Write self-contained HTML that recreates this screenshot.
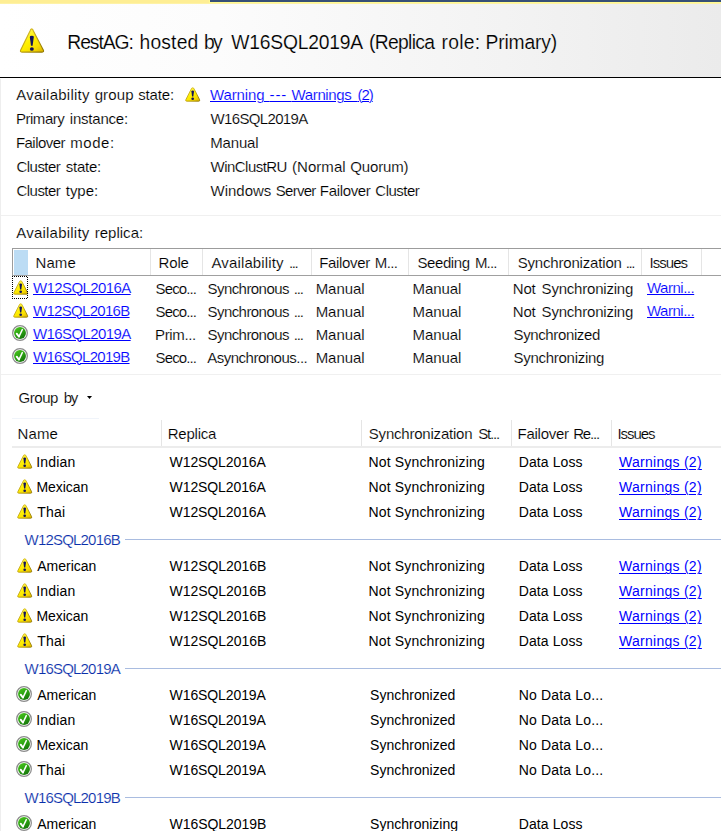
<!DOCTYPE html>
<html lang="en"><head><meta charset="utf-8"><title>RestAG dashboard</title>
<style>
html,body{margin:0;padding:0;background:#fff}
body{width:721px;height:831px;overflow:hidden;position:relative;font-family:"Liberation Sans",Arial,sans-serif;font-size:15px;color:#000}
.t{position:absolute;white-space:pre;line-height:20px;height:20px;color:#000;text-decoration:none;margin:0;font-weight:400;-webkit-text-stroke:0.15px #fff}
a.lnk,a.lnk2{color:#0000ff;text-decoration:underline #00f;text-underline-offset:1px;text-decoration-thickness:1px}
a.lnk2{text-underline-offset:2px}
.grp{color:#0a30aa}
.ms{-webkit-text-stroke:0}
.ic{position:absolute;overflow:visible}
.abs{position:absolute}
#strip{left:0;top:0;width:721px;height:4px;background:linear-gradient(#feee94 0 3px,#fef2a6 3px 4px)}
#navy{left:209px;top:0;width:511px;height:2px;background:#364f76;border-left:1px solid #fffa90;border-bottom:1px solid #fffa90}
#hdr{left:0;top:4px;width:721px;height:73px;background:linear-gradient(90deg,#ffffff 0%,#fcfcfc 30%,#f3f3f3 70%,#ebebeb 100%)}
#hline{left:0;top:77px;width:721px;height:1px;background:#000}
#lb{left:0;top:79px;width:1px;height:752px;background:#eee}
.hl{left:1px;width:720px;height:1px;background:#f0f0f0}
#lv{left:12px;top:248px;width:720px;height:28px;border:1px solid #9c9c9c;border-right:0;border-bottom:1px solid #a0a0a0;box-sizing:border-box;background:#fff}
#lvsel{left:14px;top:250px;width:14px;height:25px;background:#bcdcf4}
.sep{width:1px;background:#e5e5e5}
#focus{left:12px;top:276px;width:16px;height:23px;background:repeating-linear-gradient(90deg,#000 0 1px,transparent 1px 2px) 0 0/100% 1px no-repeat,repeating-linear-gradient(90deg,#000 0 1px,transparent 1px 2px) 0 100%/100% 1px no-repeat,repeating-linear-gradient(180deg,#000 0 1px,transparent 1px 2px) 0 0/1px 100% no-repeat,repeating-linear-gradient(180deg,transparent 0 1px,#000 1px 2px) 100% 0/1px 100% no-repeat}
#h2line{left:12px;top:446px;width:709px;height:2px;background:#ececec}
#gbline{left:12px;top:418px;width:87px;height:1px;background:#f0f4fa}
.gl{height:1px;background:#a9bce0;left:125px;width:596px}
</style></head><body>
<svg width="0" height="0" style="position:absolute"><defs>
<linearGradient id="wg" x1="0.15" y1="0.1" x2="0.8" y2="1"><stop offset="0" stop-color="#fff85a"/><stop offset=".45" stop-color="#fff000"/><stop offset=".8" stop-color="#f8dc00"/><stop offset="1" stop-color="#e2bc00"/></linearGradient>
<linearGradient id="ws" x1="0" y1="0" x2="0.9" y2="1"><stop offset="0" stop-color="#e2c838"/><stop offset=".55" stop-color="#bea010"/><stop offset="1" stop-color="#8f7600"/></linearGradient>
<linearGradient id="og" x1="0.2" y1="0" x2="0.8" y2="1"><stop offset="0" stop-color="#48c41c"/><stop offset=".5" stop-color="#2ba012"/><stop offset="1" stop-color="#14700a"/></linearGradient>
<g id="warn"><path d="M6.5 3.1 C6.9 1.4 9.2 1.4 9.6 3.1 L15.25 13.7 Q15.9 15.15 14.4 15.15 L1.75 15.15 Q.25 15.15 .9 13.7 Z" fill="url(#wg)" stroke="url(#ws)" stroke-width=".95"/><path d="M6.7 5.4 Q6.6 4.4 8.05 4.4 Q9.5 4.4 9.4 5.4 L8.7 10.6 L7.4 10.6 Z" fill="#12125c"/><ellipse cx="8.05" cy="12.65" rx="1.4" ry="1.25" fill="#12125c"/></g>
<g id="warnbig"><path d="M14.0 7.0 C14.7 4.1 16.7 4.1 17.4 7.0 L27.3 26.0 Q28.3 28.1 26.1 28.1 L5.9 28.1 Q3.7 28.1 4.7 26.0 Z" fill="url(#wg)" stroke="url(#ws)" stroke-width="1.1"/><path d="M13.8 13.0 Q13.65 11.7 15.8 11.7 Q17.95 11.7 17.8 13.0 L16.6 21.7 L15.0 21.7 Z" fill="#12125c"/><ellipse cx="15.85" cy="25.0" rx="1.95" ry="1.85" fill="#12125c"/></g>
<g id="ok"><circle cx="8" cy="8" r="7.35" fill="#fff" stroke="#8c8c8c" stroke-width="1.25"/><circle cx="8" cy="8" r="5.95" fill="url(#og)"/><path d="M4.7 8.7 L7 11.6" fill="none" stroke="#fff" stroke-width="1.9" stroke-linecap="round"/><path d="M7 11.6 L10.3 4.6" fill="none" stroke="#fff" stroke-width="1.45" stroke-linecap="round"/></g>
</defs></svg>

<div class="abs" id="strip"></div><div class="abs" id="navy"></div><div class="abs" id="lb"></div>
<header>
<div class="abs" id="hdr"></div><div class="abs" id="hline"></div>
<svg class="ic" style="left:16px;top:24px" width="32" height="32" viewBox="0 0 32 32"><use href="#warnbig"/></svg>
<h1 class="t ttl" style="left:67.3px;top:33.31px;font-size:19.3px;"><span style="letter-spacing:-1.05px;word-spacing:2.39px">RestAG: </span><span style="letter-spacing:0.17px;word-spacing:0.09px">hosted </span><span style="letter-spacing:-1.72px;word-spacing:6.75px">by </span><span style="letter-spacing:-0.23px;word-spacing:2.15px">W16SQL2019A </span><span style="letter-spacing:-0.69px;word-spacing:2.69px">(Replica </span><span style="letter-spacing:0.26px;word-spacing:-0.44px">role: </span><span style="letter-spacing:-0.19px">Primary)</span></h1>
</header>
<section id="info">
<div class="pair">
<span class="t" style="left:16.2px;top:84.8px;"><span style="letter-spacing:0.25px;word-spacing:0.44px">Availability </span><span style="letter-spacing:0.14px;word-spacing:0.2px">group </span><span style="letter-spacing:-0.16px">state:</span></span>
<svg class="ic" style="left:184.5px;top:85.5px" width="15.3" height="16" viewBox="0 0 16 16" preserveAspectRatio="none"><use href="#warn"/></svg>
<a class="t lnk" style="left:210px;top:84.8px;"><span style="letter-spacing:-0.13px;word-spacing:1.14px">Warning </span><span style="letter-spacing:0.85px;word-spacing:-0.57px">--- </span><span style="letter-spacing:-0.37px;word-spacing:2.27px">Warnings </span><span style="letter-spacing:-1.02px">(2)</span></a>
</div>
<div class="pair">
<span class="t" style="left:15.9px;top:108.8px;"><span style="letter-spacing:-0.46px;word-spacing:1.75px">Primary </span><span style="letter-spacing:-0.21px">instance:</span></span>
<span class="t" style="left:210.6px;top:108.8px;letter-spacing:-0.66px;">W16SQL2019A</span>
</div>
<div class="pair">
<span class="t" style="left:15.9px;top:132.8px;"><span style="letter-spacing:-0.52px;word-spacing:1.58px">Failover </span><span style="letter-spacing:0.54px">mode:</span></span>
<span class="t" style="left:210.2px;top:132.8px;letter-spacing:-0.15px;">Manual</span>
</div>
<div class="pair">
<span class="t" style="left:16.5px;top:156.8px;"><span style="letter-spacing:-0.54px;word-spacing:1.91px">Cluster </span><span style="letter-spacing:-0.26px">state:</span></span>
<span class="t" style="left:210.6px;top:156.8px;"><span style="letter-spacing:-0.54px;word-spacing:1.48px">WinClustRU </span><span style="letter-spacing:0.05px;word-spacing:0.4px">(Normal </span><span style="letter-spacing:-0.16px">Quorum)</span></span>
</div>
<div class="pair">
<span class="t" style="left:16.5px;top:180.8px;"><span style="letter-spacing:-0.54px;word-spacing:1.91px">Cluster </span><span style="letter-spacing:-0.04px">type:</span></span>
<span class="t" style="left:210.6px;top:180.8px;"><span style="letter-spacing:-0.02px;word-spacing:0.38px">Windows </span><span style="letter-spacing:-0.74px;word-spacing:0.81px">Server </span><span style="letter-spacing:-0.34px;word-spacing:1.01px">Failover </span><span style="letter-spacing:-0.5px">Cluster</span></span>
</div>
</section>
<div class="abs hl" style="top:215px"></div>
<section id="replicas">
<span class="t" style="left:16.2px;top:222.8px;"><span style="letter-spacing:0.23px;word-spacing:0.68px">Availability </span><span style="letter-spacing:0.03px">replica:</span></span>
<div class="abs" id="lv"></div><div class="abs" id="lvsel"></div>
<div class="lvhead">
<i class="abs sep" style="left:150px;top:249px;height:26px"></i>
<i class="abs sep" style="left:202px;top:249px;height:26px"></i>
<i class="abs sep" style="left:311px;top:249px;height:26px"></i>
<i class="abs sep" style="left:408px;top:249px;height:26px"></i>
<i class="abs sep" style="left:508px;top:249px;height:26px"></i>
<i class="abs sep" style="left:641px;top:249px;height:26px"></i>
<i class="abs sep" style="left:701px;top:249px;height:26px"></i>
<span class="t" style="left:35.5px;top:252.8px;letter-spacing:0.08px;">Name</span>
<span class="t" style="left:158.5px;top:252.8px;letter-spacing:-0.14px;">Role</span>
<span class="t" style="left:211.5px;top:252.8px;"><span style="letter-spacing:0.13px;word-spacing:1.08px">Availability </span><span style="letter-spacing:-1.42px">...</span></span>
<span class="t" style="left:319.3px;top:252.8px;"><span style="letter-spacing:-0.34px;word-spacing:1.01px">Failover </span><span style="letter-spacing:-0.61px">M...</span></span>
<span class="t" style="left:417.4px;top:252.8px;"><span style="letter-spacing:-0.4px;word-spacing:1.59px">Seeding </span><span style="letter-spacing:-0.88px">M...</span></span>
<span class="t" style="left:517.7px;top:252.8px;"><span style="letter-spacing:-0.18px;word-spacing:0.05px">Synchronization </span><span style="letter-spacing:-1.37px">...</span></span>
<span class="t" style="left:649.5px;top:252.8px;letter-spacing:-0.97px;">Issues</span>
</div>
<div class="lvrow">
<svg class="ic" style="left:12.6px;top:278.9px" width="15.3" height="16" viewBox="0 0 16 16" preserveAspectRatio="none"><use href="#warn"/></svg>
<a class="t lnk" style="left:33px;top:277.8px;letter-spacing:-0.6px;">W12SQL2016A</a>
<span class="t" style="left:155.6px;top:278.8px;letter-spacing:-0.9px;">Seco...</span>
<span class="t" style="left:207.5px;top:278.8px;"><span style="letter-spacing:-0.56px;word-spacing:1.14px">Synchronous </span><span style="letter-spacing:-1.12px">...</span></span>
<span class="t" style="left:315.7px;top:278.8px;letter-spacing:-0.07px;">Manual</span>
<span class="t" style="left:412.5px;top:278.8px;letter-spacing:-0.07px;">Manual</span>
<span class="t" style="left:512.8px;top:278.8px;"><span style="letter-spacing:-0.24px;word-spacing:2.24px">Not </span><span style="letter-spacing:-0.21px">Synchronizing</span></span>
<a class="t lnk" style="left:647px;top:277.8px;letter-spacing:-0.49px;">Warni...</a>
</div>
<div class="lvrow">
<svg class="ic" style="left:12.6px;top:301.9px" width="15.3" height="16" viewBox="0 0 16 16" preserveAspectRatio="none"><use href="#warn"/></svg>
<a class="t lnk" style="left:33px;top:300.8px;letter-spacing:-0.7px;">W12SQL2016B</a>
<span class="t" style="left:155.6px;top:301.8px;letter-spacing:-0.9px;">Seco...</span>
<span class="t" style="left:207.5px;top:301.8px;"><span style="letter-spacing:-0.56px;word-spacing:1.14px">Synchronous </span><span style="letter-spacing:-1.12px">...</span></span>
<span class="t" style="left:315.7px;top:301.8px;letter-spacing:-0.07px;">Manual</span>
<span class="t" style="left:412.5px;top:301.8px;letter-spacing:-0.07px;">Manual</span>
<span class="t" style="left:512.8px;top:301.8px;"><span style="letter-spacing:-0.24px;word-spacing:2.24px">Not </span><span style="letter-spacing:-0.21px">Synchronizing</span></span>
<a class="t lnk" style="left:647px;top:300.8px;letter-spacing:-0.49px;">Warni...</a>
</div>
<div class="lvrow">
<svg class="ic" style="left:12.06px;top:325.3px" width="16" height="16" viewBox="0 0 16 16"><use href="#ok"/></svg>
<a class="t lnk" style="left:33px;top:323.8px;letter-spacing:-0.6px;">W16SQL2019A</a>
<span class="t" style="left:155px;top:324.8px;letter-spacing:-0.36px;">Prim...</span>
<span class="t" style="left:207.5px;top:324.8px;"><span style="letter-spacing:-0.56px;word-spacing:1.14px">Synchronous </span><span style="letter-spacing:-1.12px">...</span></span>
<span class="t" style="left:315.7px;top:324.8px;letter-spacing:-0.07px;">Manual</span>
<span class="t" style="left:412.5px;top:324.8px;letter-spacing:-0.07px;">Manual</span>
<span class="t" style="left:513.5px;top:324.8px;letter-spacing:-0.37px;">Synchronized</span>
</div>
<div class="lvrow">
<svg class="ic" style="left:12.06px;top:348.3px" width="16" height="16" viewBox="0 0 16 16"><use href="#ok"/></svg>
<a class="t lnk" style="left:33px;top:346.8px;letter-spacing:-0.7px;">W16SQL2019B</a>
<span class="t" style="left:155.6px;top:347.8px;letter-spacing:-0.9px;">Seco...</span>
<span class="t" style="left:207.3px;top:347.8px;letter-spacing:-0.51px;">Asynchronous...</span>
<span class="t" style="left:315.7px;top:347.8px;letter-spacing:-0.07px;">Manual</span>
<span class="t" style="left:412.5px;top:347.8px;letter-spacing:-0.07px;">Manual</span>
<span class="t" style="left:513.5px;top:347.8px;letter-spacing:-0.28px;">Synchronizing</span>
</div>
<div class="abs" id="focus"></div>
</section>
<div class="abs hl" style="top:374px"></div>
<section id="databases">
<div class="toolbar">
<span class="t" style="left:18.5px;top:387.8px;"><span style="letter-spacing:-0.44px;word-spacing:1.96px">Group </span><span style="letter-spacing:-1.29px">by</span></span>
<svg class="ic" style="left:86px;top:396px" width="7" height="4" viewBox="0 0 7 4"><path d="M1 0 h5 l-2.5 3 z" fill="#000"/></svg>
<div class="abs" id="gbline"></div></div>
<div class="lvhead">
<i class="abs sep" style="left:161px;top:420px;height:26px"></i>
<i class="abs sep" style="left:361px;top:420px;height:26px"></i>
<i class="abs sep" style="left:511px;top:420px;height:26px"></i>
<i class="abs sep" style="left:611px;top:420px;height:26px"></i>
<span class="t" style="left:17.5px;top:423.8px;letter-spacing:0.11px;">Name</span>
<span class="t" style="left:167.75px;top:423.8px;letter-spacing:-0.24px;">Replica</span>
<span class="t" style="left:368.8px;top:423.8px;"><span style="letter-spacing:-0.21px;word-spacing:1.8px">Synchronization </span><span style="letter-spacing:-1.18px">St...</span></span>
<span class="t" style="left:517.6px;top:423.8px;"><span style="letter-spacing:-0.28px;word-spacing:0.6px">Failover </span><span style="letter-spacing:-1.2px">Re...</span></span>
<span class="t" style="left:617.5px;top:423.8px;letter-spacing:-1.07px;">Issues</span>
<div class="abs" id="h2line"></div></div>
<div class="lvrow">
<svg class="ic" style="left:16.85px;top:452.5px" width="15.3" height="16" viewBox="0 0 16 16" preserveAspectRatio="none"><use href="#warn"/></svg>
<span class="t ms" style="left:36.3px;top:452.15px;font-size:14px;letter-spacing:0.15px;">Indian</span>
<span class="t ms" style="left:169.6px;top:452.15px;font-size:14px;letter-spacing:-0.1px;">W12SQL2016A</span>
<span class="t ms" style="left:368.4px;top:452.15px;font-size:14px;letter-spacing:0.17px;">Not Synchronizing</span>
<span class="t ms" style="left:518.7px;top:452.15px;font-size:14px;letter-spacing:0.11px;">Data Loss</span>
<a class="t ms lnk2" style="left:619px;top:452.15px;font-size:14px;letter-spacing:0.27px;">Warnings (2)</a>
</div>
<div class="lvrow">
<svg class="ic" style="left:16.85px;top:477.5px" width="15.3" height="16" viewBox="0 0 16 16" preserveAspectRatio="none"><use href="#warn"/></svg>
<span class="t ms" style="left:36.5px;top:477.15px;font-size:14px;letter-spacing:-0.06px;">Mexican</span>
<span class="t ms" style="left:169.6px;top:477.15px;font-size:14px;letter-spacing:-0.1px;">W12SQL2016A</span>
<span class="t ms" style="left:368.4px;top:477.15px;font-size:14px;letter-spacing:0.17px;">Not Synchronizing</span>
<span class="t ms" style="left:518.7px;top:477.15px;font-size:14px;letter-spacing:0.11px;">Data Loss</span>
<a class="t ms lnk2" style="left:619px;top:477.15px;font-size:14px;letter-spacing:0.27px;">Warnings (2)</a>
</div>
<div class="lvrow">
<svg class="ic" style="left:16.85px;top:502.5px" width="15.3" height="16" viewBox="0 0 16 16" preserveAspectRatio="none"><use href="#warn"/></svg>
<span class="t ms" style="left:37.2px;top:502.15px;font-size:14px;letter-spacing:0.23px;">Thai</span>
<span class="t ms" style="left:169.6px;top:502.15px;font-size:14px;letter-spacing:-0.1px;">W12SQL2016A</span>
<span class="t ms" style="left:368.4px;top:502.15px;font-size:14px;letter-spacing:0.17px;">Not Synchronizing</span>
<span class="t ms" style="left:518.7px;top:502.15px;font-size:14px;letter-spacing:0.11px;">Data Loss</span>
<a class="t ms lnk2" style="left:619px;top:502.15px;font-size:14px;letter-spacing:0.27px;">Warnings (2)</a>
</div>
<div class="lvgroup">
<span class="t grp" style="left:24.6px;top:529.8px;letter-spacing:-0.81px;">W12SQL2016B</span>
<div class="abs gl" style="top:539px"></div></div>
<div class="lvrow">
<svg class="ic" style="left:16.85px;top:556.5px" width="15.3" height="16" viewBox="0 0 16 16" preserveAspectRatio="none"><use href="#warn"/></svg>
<span class="t ms" style="left:37.3px;top:556.15px;font-size:14px;letter-spacing:-0.01px;">American</span>
<span class="t ms" style="left:169.6px;top:556.15px;font-size:14px;letter-spacing:-0.06px;">W12SQL2016B</span>
<span class="t ms" style="left:368.4px;top:556.15px;font-size:14px;letter-spacing:0.17px;">Not Synchronizing</span>
<span class="t ms" style="left:518.7px;top:556.15px;font-size:14px;letter-spacing:0.11px;">Data Loss</span>
<a class="t ms lnk2" style="left:619px;top:556.15px;font-size:14px;letter-spacing:0.27px;">Warnings (2)</a>
</div>
<div class="lvrow">
<svg class="ic" style="left:16.85px;top:581.5px" width="15.3" height="16" viewBox="0 0 16 16" preserveAspectRatio="none"><use href="#warn"/></svg>
<span class="t ms" style="left:36.3px;top:581.15px;font-size:14px;letter-spacing:0.15px;">Indian</span>
<span class="t ms" style="left:169.6px;top:581.15px;font-size:14px;letter-spacing:-0.06px;">W12SQL2016B</span>
<span class="t ms" style="left:368.4px;top:581.15px;font-size:14px;letter-spacing:0.17px;">Not Synchronizing</span>
<span class="t ms" style="left:518.7px;top:581.15px;font-size:14px;letter-spacing:0.11px;">Data Loss</span>
<a class="t ms lnk2" style="left:619px;top:581.15px;font-size:14px;letter-spacing:0.27px;">Warnings (2)</a>
</div>
<div class="lvrow">
<svg class="ic" style="left:16.85px;top:606.5px" width="15.3" height="16" viewBox="0 0 16 16" preserveAspectRatio="none"><use href="#warn"/></svg>
<span class="t ms" style="left:36.5px;top:606.15px;font-size:14px;letter-spacing:-0.06px;">Mexican</span>
<span class="t ms" style="left:169.6px;top:606.15px;font-size:14px;letter-spacing:-0.06px;">W12SQL2016B</span>
<span class="t ms" style="left:368.4px;top:606.15px;font-size:14px;letter-spacing:0.17px;">Not Synchronizing</span>
<span class="t ms" style="left:518.7px;top:606.15px;font-size:14px;letter-spacing:0.11px;">Data Loss</span>
<a class="t ms lnk2" style="left:619px;top:606.15px;font-size:14px;letter-spacing:0.27px;">Warnings (2)</a>
</div>
<div class="lvrow">
<svg class="ic" style="left:16.85px;top:631.5px" width="15.3" height="16" viewBox="0 0 16 16" preserveAspectRatio="none"><use href="#warn"/></svg>
<span class="t ms" style="left:37.2px;top:631.15px;font-size:14px;letter-spacing:0.23px;">Thai</span>
<span class="t ms" style="left:169.6px;top:631.15px;font-size:14px;letter-spacing:-0.06px;">W12SQL2016B</span>
<span class="t ms" style="left:368.4px;top:631.15px;font-size:14px;letter-spacing:0.17px;">Not Synchronizing</span>
<span class="t ms" style="left:518.7px;top:631.15px;font-size:14px;letter-spacing:0.11px;">Data Loss</span>
<a class="t ms lnk2" style="left:619px;top:631.15px;font-size:14px;letter-spacing:0.27px;">Warnings (2)</a>
</div>
<div class="lvgroup">
<span class="t grp" style="left:24.6px;top:658.8px;letter-spacing:-0.81px;">W16SQL2019A</span>
<div class="abs gl" style="top:668px"></div></div>
<div class="lvrow">
<svg class="ic" style="left:16.07px;top:686px" width="16" height="16" viewBox="0 0 16 16"><use href="#ok"/></svg>
<span class="t ms" style="left:37.3px;top:685.15px;font-size:14px;letter-spacing:-0.01px;">American</span>
<span class="t ms" style="left:169.6px;top:685.15px;font-size:14px;letter-spacing:-0.1px;">W16SQL2019A</span>
<span class="t ms" style="left:370.1px;top:685.15px;font-size:14px;letter-spacing:0.04px;">Synchronized</span>
<span class="t ms" style="left:518.7px;top:685.15px;font-size:14px;letter-spacing:0.17px;">No Data Lo...</span>
</div>
<div class="lvrow">
<svg class="ic" style="left:16.07px;top:711px" width="16" height="16" viewBox="0 0 16 16"><use href="#ok"/></svg>
<span class="t ms" style="left:36.3px;top:710.15px;font-size:14px;letter-spacing:0.15px;">Indian</span>
<span class="t ms" style="left:169.6px;top:710.15px;font-size:14px;letter-spacing:-0.1px;">W16SQL2019A</span>
<span class="t ms" style="left:370.1px;top:710.15px;font-size:14px;letter-spacing:0.04px;">Synchronized</span>
<span class="t ms" style="left:518.7px;top:710.15px;font-size:14px;letter-spacing:0.17px;">No Data Lo...</span>
</div>
<div class="lvrow">
<svg class="ic" style="left:16.07px;top:736px" width="16" height="16" viewBox="0 0 16 16"><use href="#ok"/></svg>
<span class="t ms" style="left:36.5px;top:735.15px;font-size:14px;letter-spacing:-0.06px;">Mexican</span>
<span class="t ms" style="left:169.6px;top:735.15px;font-size:14px;letter-spacing:-0.1px;">W16SQL2019A</span>
<span class="t ms" style="left:370.1px;top:735.15px;font-size:14px;letter-spacing:0.04px;">Synchronized</span>
<span class="t ms" style="left:518.7px;top:735.15px;font-size:14px;letter-spacing:0.17px;">No Data Lo...</span>
</div>
<div class="lvrow">
<svg class="ic" style="left:16.07px;top:761px" width="16" height="16" viewBox="0 0 16 16"><use href="#ok"/></svg>
<span class="t ms" style="left:37.2px;top:760.15px;font-size:14px;letter-spacing:0.23px;">Thai</span>
<span class="t ms" style="left:169.6px;top:760.15px;font-size:14px;letter-spacing:-0.1px;">W16SQL2019A</span>
<span class="t ms" style="left:370.1px;top:760.15px;font-size:14px;letter-spacing:0.04px;">Synchronized</span>
<span class="t ms" style="left:518.7px;top:760.15px;font-size:14px;letter-spacing:0.17px;">No Data Lo...</span>
</div>
<div class="lvgroup">
<span class="t grp" style="left:24.6px;top:787.8px;letter-spacing:-0.81px;">W16SQL2019B</span>
<div class="abs gl" style="top:797px"></div></div>
<div class="lvrow">
<svg class="ic" style="left:16.07px;top:815px" width="16" height="16" viewBox="0 0 16 16"><use href="#ok"/></svg>
<span class="t ms" style="left:37.3px;top:814.15px;font-size:14px;letter-spacing:-0.01px;">American</span>
<span class="t ms" style="left:169.6px;top:814.15px;font-size:14px;letter-spacing:-0.06px;">W16SQL2019B</span>
<span class="t ms" style="left:370.1px;top:814.15px;font-size:14px;letter-spacing:0px;">Synchronizing</span>
<span class="t ms" style="left:518.7px;top:814.15px;font-size:14px;letter-spacing:0.11px;">Data Loss</span>
</div>
</section>
</body></html>
